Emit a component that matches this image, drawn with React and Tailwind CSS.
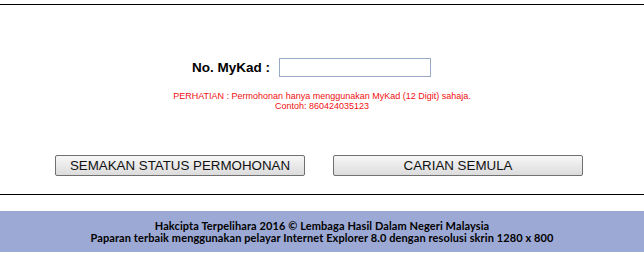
export default function App() {
  return (
    <div className="w-[644px] h-[265px] bg-white pt-[4px] font-['Liberation_Sans',Arial,sans-serif]">
      {/* Form area */}
      <div className="border-y border-black pt-[53px] pb-[18px]">
        <div className="flex items-center justify-center gap-[9px] pr-[21px]">
          <label className="text-[13.5px] font-bold text-black leading-[19px]">
            No. MyKad :
          </label>
          <input
            type="text"
            className="w-[152px] h-[19px] border border-[#98aac8] bg-white outline-none"
          />
        </div>

        <div className="mt-[14px] text-center text-[9px] leading-[10px] text-[#f01010]">
          <div>PERHATIAN : Permohonan hanya menggunakan MyKad (12 Digit) sahaja.</div>
          <div>Contoh: 860424035123</div>
        </div>

        <div className="mt-[44px] flex justify-center gap-[28px] pr-[6px]">
          <button className="w-[250px] h-[21px] border border-[#707070] rounded-[2px] bg-gradient-to-b from-[#f7f7f7] to-[#dcdcdc] text-[13.333px] leading-[19px] text-[#111]">
            SEMAKAN STATUS PERMOHONAN
          </button>
          <button className="w-[250px] h-[21px] border border-[#707070] rounded-[2px] bg-gradient-to-b from-[#f7f7f7] to-[#dcdcdc] text-[13.333px] leading-[19px] text-[#111]">
            CARIAN SEMULA
          </button>
        </div>
      </div>

      {/* Footer */}
      <div className="mt-[16px] h-[41px] bg-[#9ca9d4] flex flex-col items-center justify-center pt-[1px] text-[11px] leading-[12px] tracking-[0.1px] font-bold text-black font-['Lato',sans-serif]">
        <div>Hakcipta Terpelihara 2016 © Lembaga Hasil Dalam Negeri Malaysia</div>
        <div>Paparan terbaik menggunakan pelayar Internet Explorer 8.0 dengan resolusi skrin 1280 x 800</div>
      </div>
    </div>
  );
}
